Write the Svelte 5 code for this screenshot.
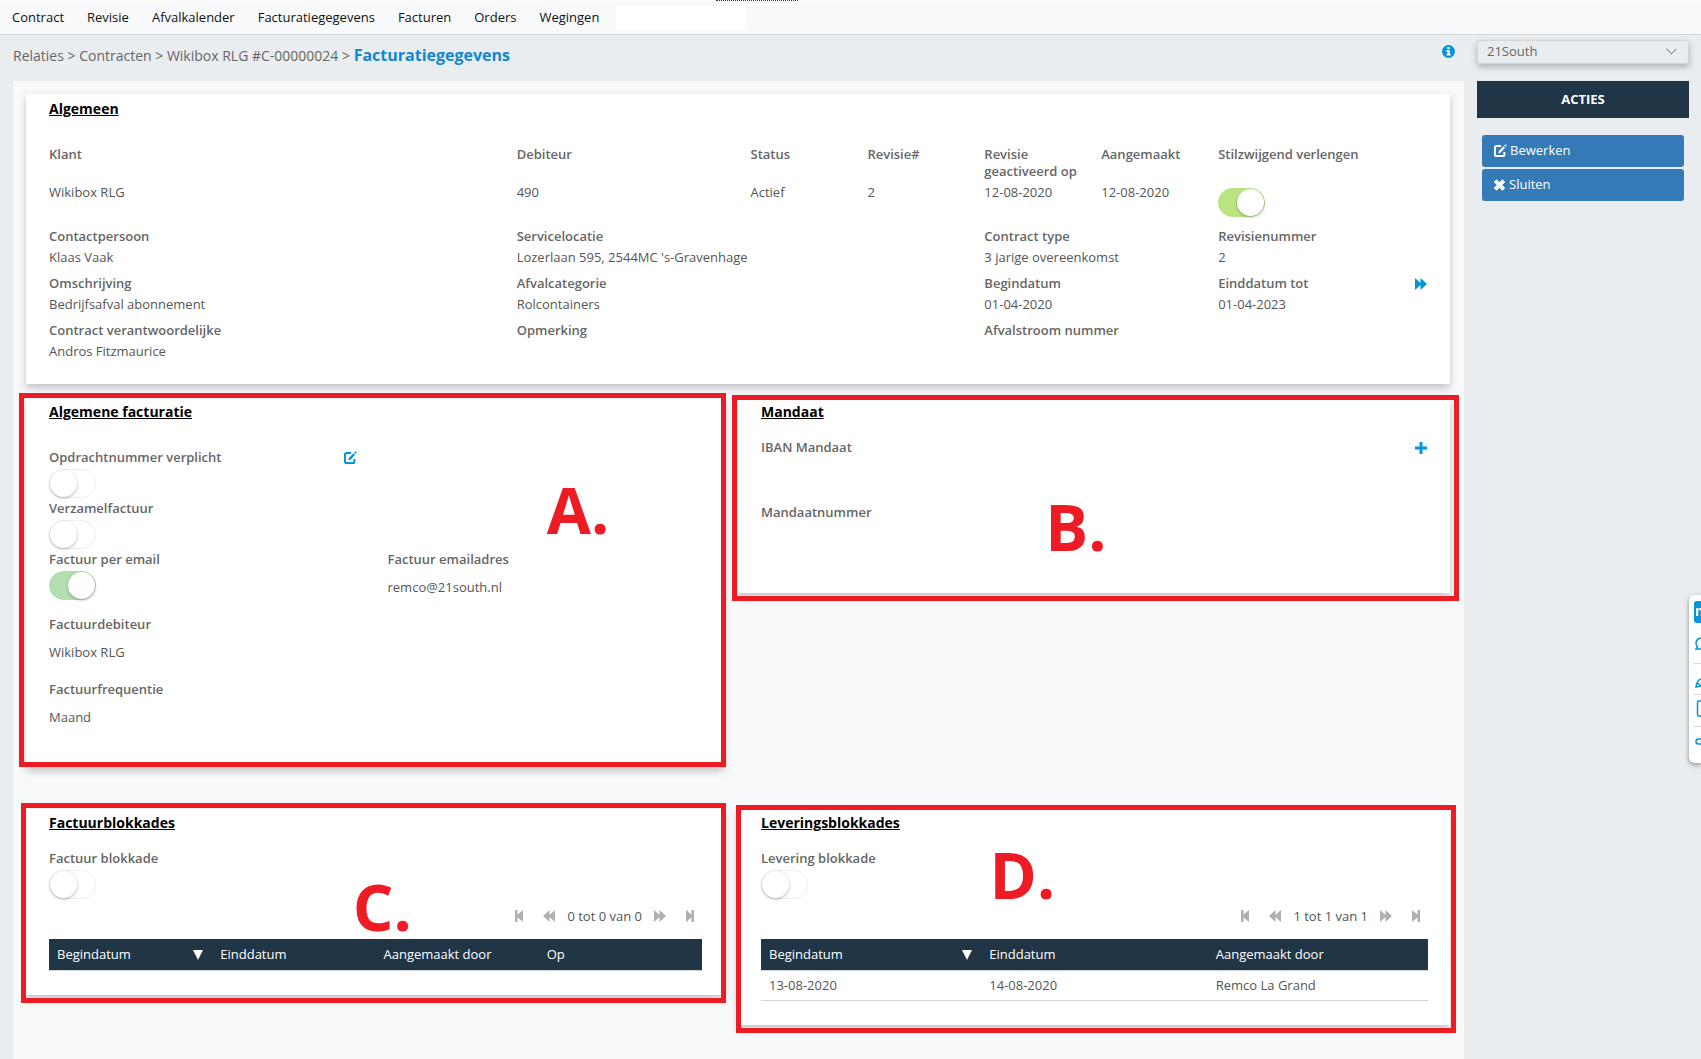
<script lang="ts">
	type Field = { label: string; value?: string; span: number; toggle?: boolean; icon?: boolean };

	const menu = ['Contract', 'Revisie', 'Afvalkalender', 'Facturatiegegevens', 'Facturen', 'Orders', 'Wegingen'];
	const crumbs = ['Relaties', 'Contracten', 'Wikibox RLG #C-00000024'];

	const general: Field[] = [
		{ label: 'Klant', value: 'Wikibox RLG', span: 4 },
		{ label: 'Debiteur', value: '490', span: 2 },
		{ label: 'Status', value: 'Actief', span: 1 },
		{ label: 'Revisie#', value: '2', span: 1 },
		{ label: 'Revisie geactiveerd op', value: '12-08-2020', span: 1 },
		{ label: 'Aangemaakt', value: '12-08-2020', span: 1 },
		{ label: 'Stilzwijgend verlengen', span: 2, toggle: true }
	];

	const details: Field[] = [
		{ label: 'Contactpersoon', value: 'Klaas Vaak', span: 4 },
		{ label: 'Servicelocatie', value: "Lozerlaan 595, 2544MC 's-Gravenhage", span: 4 },
		{ label: 'Contract type', value: '3 jarige overeenkomst', span: 2 },
		{ label: 'Revisienummer', value: '2', span: 2 },
		{ label: 'Omschrijving', value: 'Bedrijfsafval abonnement', span: 4 },
		{ label: 'Afvalcategorie', value: 'Rolcontainers', span: 4 },
		{ label: 'Begindatum', value: '01-04-2020', span: 2 },
		{ label: 'Einddatum tot', value: '01-04-2023', span: 2, icon: true },
		{ label: 'Contract verantwoordelijke', value: 'Andros Fitzmaurice', span: 4 },
		{ label: 'Opmerking', span: 4 },
		{ label: 'Afvalstroom nummer', span: 2 }
	];

	const invoiceColumns = [
		{ name: 'Begindatum', width: 25 },
		{ name: 'Einddatum', width: 25 },
		{ name: 'Aangemaakt door', width: 25 },
		{ name: 'Op', width: 25 }
	];
	const deliveryColumns = [
		{ name: 'Begindatum', width: 33 },
		{ name: 'Einddatum', width: 34 },
		{ name: 'Aangemaakt door', width: 33 }
	];
	const deliveryRows = [['13-08-2020', '14-08-2020', 'Remco La Grand']];

	let renew = $state(true);
	let orderRequired = $state(false);
	let collective = $state(false);
	let byEmail = $state(true);
	let invoiceBlock = $state(false);
	let deliveryBlock = $state(false);
</script>

{#snippet editIcon()}
	<svg class="icon" viewBox="0 0 14 14" aria-hidden="true">
		<path d="M8.2 2H3.600Q2 2 2 3.600v6.800Q2 12 3.600 12h6.200q1.600 0 1.600-1.600V8" fill="none" stroke="currentColor" stroke-width="2" />
		<path d="M5.200 9.500l.8-2.800L10.500 2.200l1.600 1.600L7.800 8.500zM11.200 1.500l.9-.9q.4-.4.8 0l.5.500q.4.400 0 .8l-.9.900z" fill="currentColor" />
	</svg>
{/snippet}

{#snippet forward()}
	<svg class="arrows" viewBox="0 0 12 12" aria-hidden="true"><path d="M0 0l5.500 5V0L12 6l-6.500 6V7L0 12z" fill="currentColor" /></svg>
{/snippet}

{#snippet backward()}
	<svg class="arrows" viewBox="0 0 12 12" aria-hidden="true"><path d="M12 0L6.500 5V0L0 6l6.500 6V7L12 12z" fill="currentColor" /></svg>
{/snippet}

{#snippet pager(text: string)}
	<div class="pager">
		<div class="pager-group">
			<button aria-label="Eerste">
				<svg class="step" viewBox="0 0 8 12" aria-hidden="true"><path d="M0 0h2.500v4.500L8 0v12L2.500 7.500V12H0z" fill="currentColor" /></svg>
			</button>
			<button aria-label="Vorige">{@render backward()}</button>
		</div>
		<span>{text}</span>
		<div class="pager-group">
			<button aria-label="Volgende">{@render forward()}</button>
			<button aria-label="Laatste">
				<svg class="step" viewBox="0 0 8 12" aria-hidden="true"><path d="M8 0H5.500v4.500L0 0v12l5.500-4.500V12H8z" fill="currentColor" /></svg>
			</button>
		</div>
	</div>
{/snippet}

{#snippet grid(columns: { name: string; width: number }[], rows: string[][])}
	<table>
		<thead>
			<tr>
				{#each columns as column, i}
					<th style="width: {column.width}%">
						<div class="heading">
							{column.name}
							{#if i === 0}
								<svg class="sort" viewBox="0 0 10 10" aria-hidden="true"><path d="M0 0h10L5 10z" fill="currentColor" /></svg>
							{/if}
						</div>
					</th>
				{/each}
			</tr>
		</thead>
		<tbody>
			{#each rows as row}
				<tr>
					{#each row as cell}
						<td>{cell}</td>
					{/each}
				</tr>
			{/each}
		</tbody>
	</table>
{/snippet}

<div class="app">
	<nav>
		{#each menu as item}
			<a href="#{item}">{item}</a>
		{/each}
		<span class="blank"></span>
		<span class="dots"></span>
	</nav>

	<div class="page">
		<main>
			<header>
				<div class="crumbs">
					{#each crumbs as crumb}
						<a href="#{crumb}">{crumb}</a>{' > '}
					{/each}
					<strong>Facturatiegegevens</strong>
				</div>
				<svg class="info" viewBox="0 0 13 13" aria-hidden="true">
					<circle cx="6.5" cy="6.5" r="6.500" fill="currentColor" />
					<path d="M5.300 2h2.400v2H5.300zM4.500 5h3.200v4h.9v1.500H4.500V9h.9V6.500h-.9z" fill="#fff" />
				</svg>
			</header>

			<div class="panel">
				<section class="card general">
					<h2>Algemeen</h2>
					<div class="fields first">
						{#each general as field}
							<div class="field span{field.span}">
								{#if field.toggle}
									<label for="renew">{field.label}</label>
									<input id="renew" class="lime" type="checkbox" bind:checked={renew} />
								{:else}
									<h3>{field.label}</h3>
									<p>{field.value}</p>
								{/if}
							</div>
						{/each}
					</div>
					<div class="fields">
						{#each details as field}
							<div class="field span{field.span}">
								<div class="line">
									<h3>{field.label}</h3>
									{#if field.icon}
										<button class="link" aria-label="Verlengen">{@render forward()}</button>
									{/if}
								</div>
								<p>{field.value ?? ''}</p>
							</div>
						{/each}
					</div>
				</section>

				<div class="cards">
					<section class="card tall">
						<h2>Algemene facturatie</h2>
						<div class="halves">
							<div class="field">
								<div class="line">
									<label for="order">Opdrachtnummer verplicht</label>
									<button class="link edit" aria-label="Wijzigen">{@render editIcon()}</button>
								</div>
								<input id="order" type="checkbox" bind:checked={orderRequired} />
							</div>
						</div>
						<div class="halves">
							<div class="field">
								<label for="collective">Verzamelfactuur</label>
								<input id="collective" type="checkbox" bind:checked={collective} />
							</div>
						</div>
						<div class="halves roomy">
							<div class="field">
								<label for="email">Factuur per email</label>
								<input id="email" type="checkbox" bind:checked={byEmail} />
							</div>
							<div class="field">
								<h3>Factuur emailadres</h3>
								<p>remco@21south.nl</p>
							</div>
						</div>
						<div class="halves roomy">
							<div class="field">
								<h3>Factuurdebiteur</h3>
								<p>Wikibox RLG</p>
							</div>
						</div>
						<div class="halves roomy">
							<div class="field">
								<h3>Factuurfrequentie</h3>
								<p>Maand</p>
							</div>
						</div>
						<div class="mark mark-a"><span>A.</span></div>
					</section>

					<section class="card compact">
						<h2>Mandaat</h2>
						<div class="roomy">
							<div class="field line">
								<h3>IBAN Mandaat</h3>
								<button class="link" aria-label="Toevoegen">
									<svg class="arrows" viewBox="0 0 12 12" aria-hidden="true"><path d="M4.500 0h3v4.500H12v3H7.500V12h-3V7.500H0v-3h4.500z" fill="currentColor" /></svg>
								</button>
							</div>
						</div>
						<div class="roomy">
							<div class="field">
								<h3>Mandaatnummer</h3>
							</div>
						</div>
						<div class="mark mark-b"><span>B.</span></div>
					</section>
				</div>

				<div class="cards">
					<section class="card compact">
						<h2>Factuurblokkades</h2>
						<div class="field">
							<label for="invoice-block">Factuur blokkade</label>
							<input id="invoice-block" type="checkbox" bind:checked={invoiceBlock} />
							{@render pager('0 tot 0 van 0')}
							{@render grid(invoiceColumns, [])}
						</div>
						<div class="mark mark-c"><span>C.</span></div>
					</section>

					<section class="card compact">
						<h2>Leveringsblokkades</h2>
						<div class="field">
							<label for="delivery-block">Levering blokkade</label>
							<input id="delivery-block" type="checkbox" bind:checked={deliveryBlock} />
							{@render pager('1 tot 1 van 1')}
							{@render grid(deliveryColumns, deliveryRows)}
						</div>
						<div class="mark mark-d"><span>D.</span></div>
					</section>
				</div>
			</div>
		</main>

		<aside>
			<div class="company">
				<select aria-label="Bedrijf">
					<option>21South</option>
				</select>
				<svg viewBox="0 0 12 7" aria-hidden="true"><path d="M.5.5L6 6 11.500.5" fill="none" stroke="currentColor" /></svg>
			</div>
			<h4>ACTIES</h4>
			<div class="actions">
				<button>{@render editIcon()} Bewerken</button>
				<button>
					<svg class="icon cross" viewBox="0 0 12 12" aria-hidden="true"><path d="M3 .3l3 3 3-3L11.700 3l-3 3 3 3L9 11.700l-3-3-3 3L.3 9l3-3-3-3z" fill="currentColor" /></svg>
					Sluiten
				</button>
			</div>
		</aside>
	</div>

	<div class="widget">
		<span class="logo">m</span>
		<svg viewBox="0 0 7 140" aria-hidden="true">
			<g fill="none" stroke="#0595db" stroke-width="1.500">
				<path d="M7 6a5 5 0 0 0-3.500 8.500L2 17h5" />
				<path d="M7 47q-4 1-5 8l5-1M3.500 51L7 54" />
				<path d="M7 69H5Q3.500 69 3.500 71v11q0 2 1.500 2H7" />
				<path d="M7 107H4.500a2.500 2.500 0 0 0 0 5H7" />
			</g>
			<path d="M0 31.500h7M0 62.500h7M0 94.500h7" stroke="#d5d9dc" />
		</svg>
	</div>
</div>

<style>
	:global(body) {
		background: #e9edf0;
	}
	.app {
		display: flex;
		flex-direction: column;
		min-height: 100vh;
		font: 13px/17px "Open Sans", sans-serif;
		color: #555;
	}
	a {
		color: inherit;
		text-decoration: none;
	}
	h2,
	h3,
	h4,
	p {
		margin: 0;
	}
	button {
		font: inherit;
		border: none;
		cursor: pointer;
	}
	svg {
		display: block;
	}

	nav {
		position: relative;
		display: flex;
		align-items: center;
		gap: 23px;
		height: 33px;
		padding: 0 12px;
		background: #f8f9fb;
		border-top: 1px solid #fff;
		border-bottom: 1px solid #d2d6d9;
		color: #111;
	}
	.blank {
		width: 130px;
		height: 23px;
		margin-left: -6px;
		background: #fff;
	}
	.dots {
		position: absolute;
		top: -1px;
		left: 716px;
		width: 82px;
		border-top: 1px dotted #333;
	}

	.page {
		flex: 1;
		display: flex;
		gap: 13px;
		padding: 0 12px 0 13px;
	}
	main {
		flex: 1;
		min-width: 0;
		display: flex;
		flex-direction: column;
	}
	header {
		display: flex;
		justify-content: space-between;
		align-items: center;
		height: 32px;
		padding: 4px 9px 10px 0;
	}
	.crumbs {
		font-size: 14px;
		line-height: 24px;
		color: #666;
	}
	.crumbs strong {
		font-size: 16px;
		font-weight: 700;
		color: #1187cf;
	}
	.info {
		width: 13px;
		height: 13px;
		margin-bottom: 8px;
		color: #0595db;
	}

	.panel {
		flex: 1;
		display: flex;
		flex-direction: column;
		padding: 13px 14px 0 13px;
		background: #f8f9fb;
	}
	.card {
		position: relative;
		padding: 4px 10px 24px 11px;
		background: #fff;
		box-shadow: 0 4px 8px rgba(0, 0, 0, .22);
	}
	.card.general {
		padding-top: 5px;
	}
	.card.tall {
		padding-bottom: 21px;
	}
	.cards {
		display: grid;
		grid-template-columns: 698fr 712fr;
		align-items: start;
		column-gap: 14px;
		margin-top: 14px;
	}
	.cards + .cards {
		margin-top: 42px;
	}
	h2 {
		margin: 0 12px 27px;
		font-size: 14px;
		line-height: 20px;
		font-weight: 700;
		color: #000;
		text-decoration: underline;
	}
	.compact h2 {
		margin-bottom: 17px;
	}
	h3,
	label {
		display: block;
		font-size: 13px;
		font-weight: 600;
		color: #666;
	}

	.fields {
		display: grid;
		grid-template-columns: repeat(12, 1fr);
		row-gap: 9px;
	}
	.fields p {
		margin-top: 4px;
	}
	.first {
		margin-bottom: 9px;
	}
	.first h3,
	.first label {
		min-height: 34px;
	}
	.first input {
		margin-top: 8px;
	}
	.field {
		padding: 0 12px;
		min-width: 0;
	}
	.span1 {
		grid-column: span 1;
	}
	.span2 {
		grid-column: span 2;
	}
	.span4 {
		grid-column: span 4;
	}
	.line {
		display: flex;
		justify-content: space-between;
		align-items: center;
	}
	.halves {
		display: grid;
		grid-template-columns: 1fr 1fr;
	}
	.roomy {
		min-height: 65px;
	}
	.roomy p {
		margin-top: 11px;
	}

	input {
		appearance: none;
		display: block;
		box-sizing: border-box;
		width: 47px;
		height: 29px;
		margin: 3px 0 2px;
		padding: 1px;
		border-radius: 15px;
		border: 1px solid #eee;
		background: #fff;
		cursor: pointer;
	}
	input::before {
		content: "";
		display: block;
		width: 27px;
		height: 27px;
		margin: -1px;
		border-radius: 50%;
		background: #fff;
		box-shadow: 0 1px 3px rgba(0, 0, 0, .3);
	}
	input:checked {
		background: #b1dfb1;
		border-color: #b1dfb1;
	}
	input.lime:checked {
		background: #b9e47f;
		border-color: #b9e47f;
	}
	input:checked::before {
		margin-left: 17px;
	}

	.link {
		margin-right: 1px;
		padding: 0;
		background: none;
		color: #0595db;
	}
	.edit {
		margin-right: -5px;
		padding-right: 12px;
	}
	.icon {
		width: 14px;
		height: 14px;
	}
	.arrows {
		width: 12px;
		height: 12px;
	}
	.step {
		width: 8px;
		height: 12px;
	}

	.pager {
		display: flex;
		justify-content: flex-end;
		align-items: center;
		gap: 12px;
		height: 18px;
		padding: 6px 8px 14px;
	}
	.pager-group {
		display: flex;
		gap: 20px;
	}
	.pager button {
		padding: 0;
		background: none;
		color: #b0b0b0;
	}
	table {
		width: 100%;
		table-layout: fixed;
		border-collapse: collapse;
	}
	th {
		height: 31px;
		padding: 0 9px 0 8px;
		background: #203546;
		border-bottom: 1px solid #d5d5d5;
		color: #fff;
		font-weight: 400;
		text-align: left;
	}
	.heading {
		display: flex;
		justify-content: space-between;
		align-items: center;
	}
	.sort {
		width: 10px;
		height: 10px;
	}
	td {
		height: 29px;
		padding: 0 8px;
		border-bottom: 1px solid #d5d5d5;
	}

	/* Red frames with their letters lie on top of the cards */
	.mark {
		position: absolute;
		border: 5px solid #ed1c24;
		color: #ed1c24;
		font-size: 64px;
		line-height: 64px;
		font-weight: 700;
		pointer-events: none;
	}
	.mark span {
		position: absolute;
	}
	.mark-a {
		inset: -5px -2px 0 -7px;
	}
	.mark-a span {
		left: 75%;
		top: 80px;
	}
	.mark-b {
		inset: -3px -9px -8px -6px;
	}
	.mark-b span {
		left: 43%;
		top: 95px;
	}
	.mark-c {
		inset: -6px -2px -8px -5px;
	}
	.mark-c span {
		left: 47%;
		top: 67px;
	}
	.mark-d {
		inset: -4px -6px -8px -2px;
	}
	.mark-d span {
		left: 35%;
		top: 33px;
	}

	aside {
		width: 212px;
		padding-top: 5px;
	}
	.company {
		position: relative;
		height: 24px;
		margin-bottom: 17px;
	}
	select {
		appearance: none;
		display: block;
		width: 100%;
		height: 24px;
		padding: 0 9px 2px;
		border: 1px solid #d3d7da;
		border-radius: 3px;
		background: #e9edf0;
		box-shadow: 0 3px 6px rgba(0, 0, 0, .25);
		font: inherit;
		color: #666;
	}
	.company svg {
		position: absolute;
		top: 8px;
		right: 12px;
		width: 11px;
		height: 7px;
	}
	h4 {
		background: #203546;
		color: #fff;
		font-size: 13px;
		line-height: 37px;
		font-weight: 700;
		text-align: center;
	}
	.actions {
		display: grid;
		gap: 2px;
		padding: 17px 5px;
	}
	.actions button {
		display: flex;
		align-items: center;
		gap: 3px;
		height: 32px;
		padding: 0 11px 1px;
		border-radius: 3px;
		background: #337ab7;
		color: #fff;
	}
	.cross {
		width: 13px;
		height: 12px;
	}

	.widget {
		position: fixed;
		top: 595px;
		right: 0;
		box-sizing: border-box;
		width: 12px;
		height: 168px;
		padding: 6px 0 0 5px;
		overflow: hidden;
		border-radius: 6px 0 0 6px;
		background: #fff;
		box-shadow: 0 2px 5px rgba(0, 0, 0, .4);
	}
	.logo {
		display: block;
		width: 20px;
		height: 22px;
		padding-left: 1px;
		border-radius: 3px;
		background: #0595db;
		color: #fff;
		font-size: 14px;
		line-height: 20px;
		font-weight: 700;
	}
	.widget svg {
		width: 7px;
		height: 140px;
		margin-top: 9px;
	}
</style>
